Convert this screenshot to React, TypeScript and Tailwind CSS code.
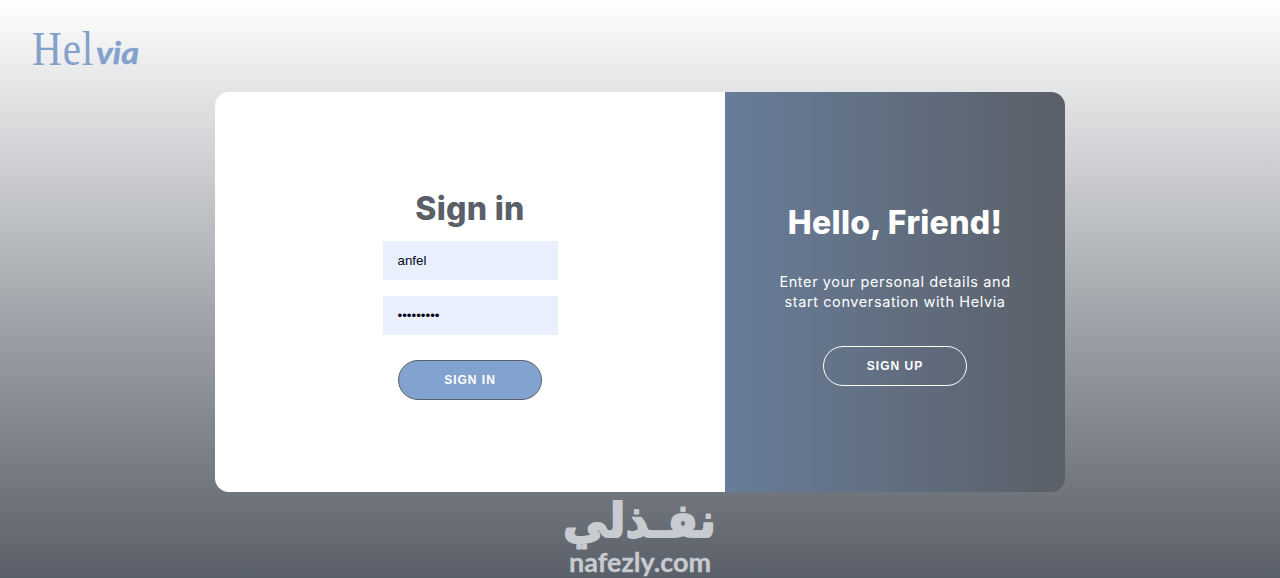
import { ButtonHTMLAttributes, InputHTMLAttributes } from "react";

const Logo = () => {
  return (
    <svg width="124" height="64" viewBox="0 0 124 64" fill="#84a1cb">
      <text
        y="50"
        transform="scale(0.86 1)"
        className="font-['Liberation_Serif',serif] text-[48px] tracking-[1px]"
      >
        Hel
      </text>
      <text
        x="64"
        y="48.5"
        textLength="43"
        lengthAdjust="spacingAndGlyphs"
        stroke="#84a1cb"
        strokeWidth="0.5"
        strokeLinejoin="round"
        className="font-[Lato,sans-serif] text-[31px] font-bold italic"
      >
        via
      </text>
    </svg>
  );
};

const Field = (props: InputHTMLAttributes<HTMLInputElement>) => {
  return (
    <input
      {...props}
      className="w-[175px] h-[39px] px-[15px] bg-[#e9effd] text-[13.333px] text-[#07071c] font-['Liberation_Sans',sans-serif] outline-none"
    />
  );
};

type PillProps = ButtonHTMLAttributes<HTMLButtonElement> & {
  variant: "solid" | "ghost";
};

const Pill = ({ variant, ...props }: PillProps) => {
  const color =
    variant === "solid"
      ? "bg-[#82a2cf] border-[#5a6068]"
      : "bg-transparent border-white";
  return (
    <button
      {...props}
      className={`w-36 h-10 rounded-[20px] border text-xs font-bold tracking-[1px] text-white uppercase font-['Liberation_Sans',sans-serif] ${color}`}
    />
  );
};

const Watermark = () => {
  return (
    <div className="absolute left-[552px] top-[472px] w-[175px] h-[106px] text-[#c8cbd0] pointer-events-none">
      <svg
        width="175"
        height="106"
        viewBox="0 0 175 106"
        fill="currentColor"
        stroke="currentColor"
        strokeLinejoin="round"
      >
        <text
          x="87.5"
          y="65"
          textAnchor="middle"
          textLength="153"
          lengthAdjust="spacingAndGlyphs"
          strokeWidth="2"
          className="font-['DejaVu_Sans',sans-serif] text-[47px] leading-none font-bold"
        >
          نفـذلي
        </text>
        <text
          x="17"
          y="99.5"
          textLength="142"
          lengthAdjust="spacingAndGlyphs"
          strokeWidth="0.3"
          className="font-[Lato,sans-serif] text-[26px] leading-none font-bold"
        >
          nafezly.com
        </text>
      </svg>
    </div>
  );
};

const App = () => {
  return (
    <div className="relative h-[578px] w-full overflow-hidden bg-linear-to-b from-white to-[#5a6069] font-[Inter,sans-serif]">
      <header className="h-[92px] pt-[15px] pl-8">
        <Logo />
      </header>
      <main className="mx-auto flex w-[850px] h-[400px] rounded-[14px] overflow-hidden">
        <form className="flex flex-col items-center w-[510px] pt-[92px] bg-white">
          <h1 className="h-12 mb-[9px] text-[32px] leading-[50px] font-extrabold tracking-[0.3px] text-[#5a6068]">
            Sign in
          </h1>
          <div className="flex flex-col gap-4 mb-[25px]">
            <Field type="text" defaultValue="anfel" />
            <Field type="password" defaultValue="anfelanfe" />
          </div>
          <Pill type="button" variant="solid">
            Sign in
          </Pill>
        </form>
        <section className="flex flex-col items-center w-[340px] pt-[106px] bg-linear-to-r from-[#687d99] to-[#5a6068] text-white text-center">
          <h2 className="h-12 text-[32px] leading-[50px] font-extrabold tracking-[0.3px]">
            Hello, Friend!
          </h2>
          <p className="mt-[26px] mb-[34px] text-[14.5px] leading-5 tracking-[0.6px]">
            Enter your personal details and
            <br />
            start conversation with Helvia
          </p>
          <Pill type="button" variant="ghost">
            Sign up
          </Pill>
        </section>
      </main>
      <Watermark />
    </div>
  );
};

export default App;
